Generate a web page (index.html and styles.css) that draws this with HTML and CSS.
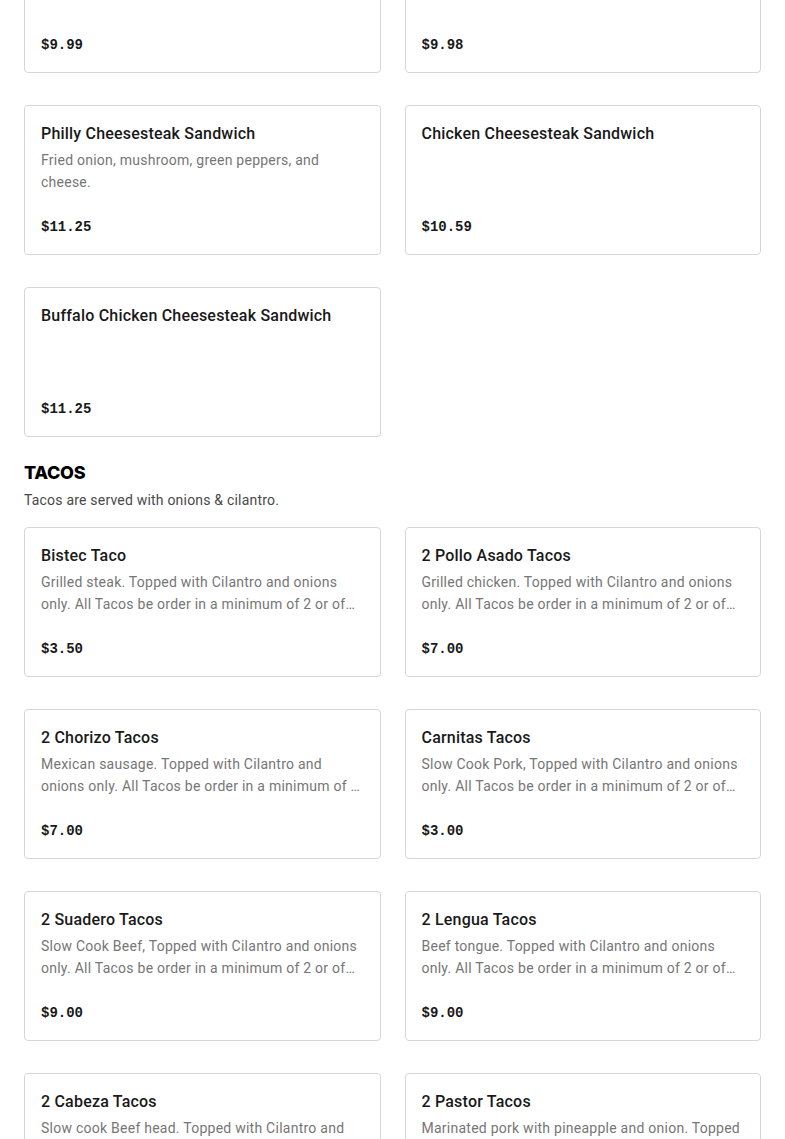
FILE: index.html
```html
<!DOCTYPE html>
<html lang="en">
<head>
<meta charset="utf-8">
<title>Menu</title>
<link rel="stylesheet" href="styles.css">
</head>
<body>
<main class="menu">
  <section class="section section-first">
    <div class="grid">
      <div class="card">
        <div class="card-title"></div>
        <div class="card-desc"></div>
        <div class="card-price">$9.99</div>
      </div>
      <div class="card">
        <div class="card-title"></div>
        <div class="card-desc"></div>
        <div class="card-price">$9.98</div>
      </div>
      <div class="card">
        <div class="card-title">Philly Cheesesteak Sandwich</div>
        <div class="card-desc">Fried onion, mushroom, green peppers, and cheese.</div>
        <div class="card-price">$11.25</div>
      </div>
      <div class="card">
        <div class="card-title">Chicken Cheesesteak Sandwich</div>
        <div class="card-desc"></div>
        <div class="card-price">$10.59</div>
      </div>
      <div class="card">
        <div class="card-title">Buffalo Chicken Cheesesteak Sandwich</div>
        <div class="card-desc"></div>
        <div class="card-price">$11.25</div>
      </div>
    </div>
  </section>

  <section class="section">
    <h2 class="section-title">TACOS</h2>
    <p class="section-sub">Tacos are served with onions &amp; cilantro.</p>
    <div class="grid">
      <div class="card">
        <div class="card-title">Bistec Taco</div>
        <div class="card-desc">Grilled steak. Topped with Cilantro and onions only. All Tacos be order in a minimum of 2 or of the same kind.</div>
        <div class="card-price">$3.50</div>
      </div>
      <div class="card">
        <div class="card-title">2 Pollo Asado Tacos</div>
        <div class="card-desc">Grilled chicken. Topped with Cilantro and onions only. All Tacos be order in a minimum of 2 or of the same kind.</div>
        <div class="card-price">$7.00</div>
      </div>
      <div class="card">
        <div class="card-title">2 Chorizo Tacos</div>
        <div class="card-desc">Mexican sausage. Topped with Cilantro and onions only. All Tacos be order in a minimum of 2 or of the same kind.</div>
        <div class="card-price">$7.00</div>
      </div>
      <div class="card">
        <div class="card-title">Carnitas Tacos</div>
        <div class="card-desc">Slow Cook Pork, Topped with Cilantro and onions only. All Tacos be order in a minimum of 2 or of the same kind.</div>
        <div class="card-price">$3.00</div>
      </div>
      <div class="card">
        <div class="card-title">2 Suadero Tacos</div>
        <div class="card-desc">Slow Cook Beef, Topped with Cilantro and onions only. All Tacos be order in a minimum of 2 or of the same kind.</div>
        <div class="card-price">$9.00</div>
      </div>
      <div class="card">
        <div class="card-title">2 Lengua Tacos</div>
        <div class="card-desc">Beef tongue. Topped with Cilantro and onions only. All Tacos be order in a minimum of 2 or of the same kind.</div>
        <div class="card-price">$9.00</div>
      </div>
      <div class="card">
        <div class="card-title">2 Cabeza Tacos</div>
        <div class="card-desc">Slow cook Beef head. Topped with Cilantro and onions only. All Tacos be order in a minimum of 2 or of the same kind.</div>
        <div class="card-price">$9.00</div>
      </div>
      <div class="card">
        <div class="card-title">2 Pastor Tacos</div>
        <div class="card-desc">Marinated pork with pineapple and onion. Topped with Cilantro and onions only. All Tacos be order in a minimum of 2 or of the same kind.</div>
        <div class="card-price">$9.00</div>
      </div>
    </div>
  </section>
</main>
</body>
</html>
```

FILE: styles.css
```css
* {
  box-sizing: border-box;
}

html, body {
  margin: 0;
  padding: 0;
  background: #ffffff;
}

body {
  font-family: Roboto, Inter, "Liberation Sans", sans-serif;
  color: #191919;
  overflow: hidden;
}

.menu {
  padding: 0 24px;
  margin-top: -77px;
}

.section + .section {
  margin-top: 24px;
}

.section-title {
  margin: 0;
  font-family: Inter, Roboto, sans-serif;
  font-size: 18px;
  line-height: 24px;
  font-weight: 800;
  color: #000000;
  letter-spacing: -0.3px;
}

.section-sub {
  margin: 5px 0 17px;
  font-size: 14px;
  line-height: 20px;
  color: #494949;
  letter-spacing: 0.2px;
}

.grid {
  display: grid;
  grid-template-columns: 1fr 1fr;
  column-gap: 24px;
  row-gap: 32px;
}

.card {
  border: 1px solid #d6d6d6;
  border-radius: 4px;
  padding: 17px 16px 16px;
  height: 150px;
  display: flex;
  flex-direction: column;
}

.card-title {
  font-size: 16px;
  line-height: 22px;
  font-weight: 500;
  color: #191919;
  min-height: 22px;
  letter-spacing: 0.2px;
}

.card-desc {
  margin-top: 4px;
  font-size: 14px;
  line-height: 22px;
  color: #767676;
  height: 44px;
  letter-spacing: 0.25px;
  overflow: hidden;
  display: -webkit-box;
  -webkit-line-clamp: 2;
  -webkit-box-orient: vertical;
}

.card-price {
  margin-top: auto;
  font-family: "Liberation Mono", "DejaVu Sans Mono", monospace;
  font-size: 14px;
  line-height: 22px;
  font-weight: 700;
  color: #191919;
}
```
